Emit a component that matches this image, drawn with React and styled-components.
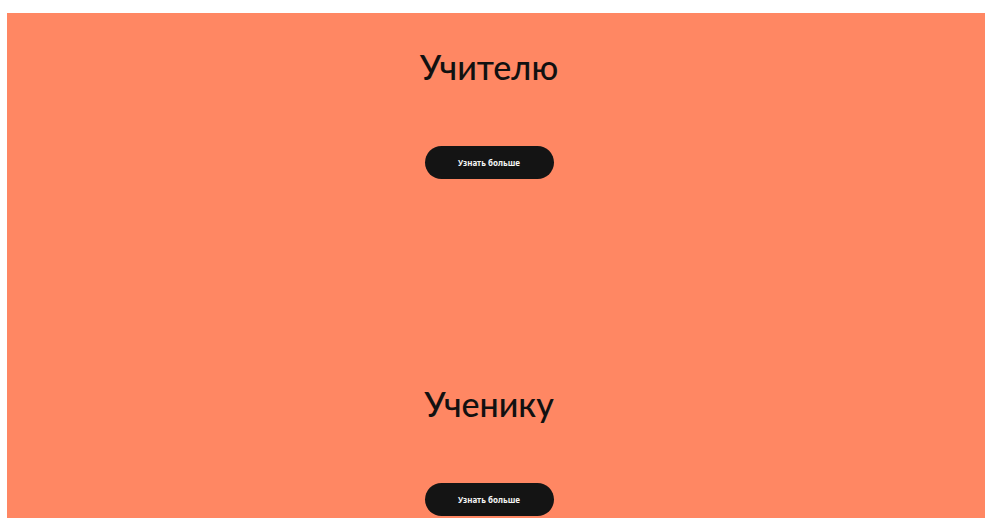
import React from "react";
import styled, { createGlobalStyle } from "styled-components";

const Global = createGlobalStyle`
  html, body { margin: 0; padding: 0; background: #ffffff; }
  body { font-family: Lato, "Noto Sans", "Liberation Sans", sans-serif; }
  #root { padding: 13px 1px 0 7px; }
`;

const Page = styled.main`
  background: #ff8763;
  display: flex;
  flex-direction: column;
  height: 505px;
  overflow: hidden;
`;

const Section = styled.section`
  display: flex;
  flex-direction: column;
  align-items: center;
  height: 337px;
  flex-shrink: 0;
  box-sizing: border-box;
  padding: 30px 14px 0 0;
`;

const Title = styled.h2`
  margin: 0;
  font-family: Lato, "Noto Sans", sans-serif;
  font-size: 34px;
  line-height: 48px;
  font-weight: 500;
  color: #111111;
`;

const MoreButton = styled.button`
  margin-top: 55px;
  width: 129px;
  height: 33px;
  border: none;
  border-radius: 17px;
  background: #141414;
  color: #f4f4f4;
  font-family: "Noto Sans", "Liberation Sans", sans-serif;
  font-size: 8px;
  font-weight: 700;
  cursor: pointer;
`;

const roles = ["Учителю", "Ученику"];

export default function App() {
  return (
    <>
      <Global />
      <Page>
        {roles.map((r) => (
          <Section key={r}>
            <Title>{r}</Title>
            <MoreButton>Узнать больше</MoreButton>
          </Section>
        ))}
      </Page>
    </>
  );
}
